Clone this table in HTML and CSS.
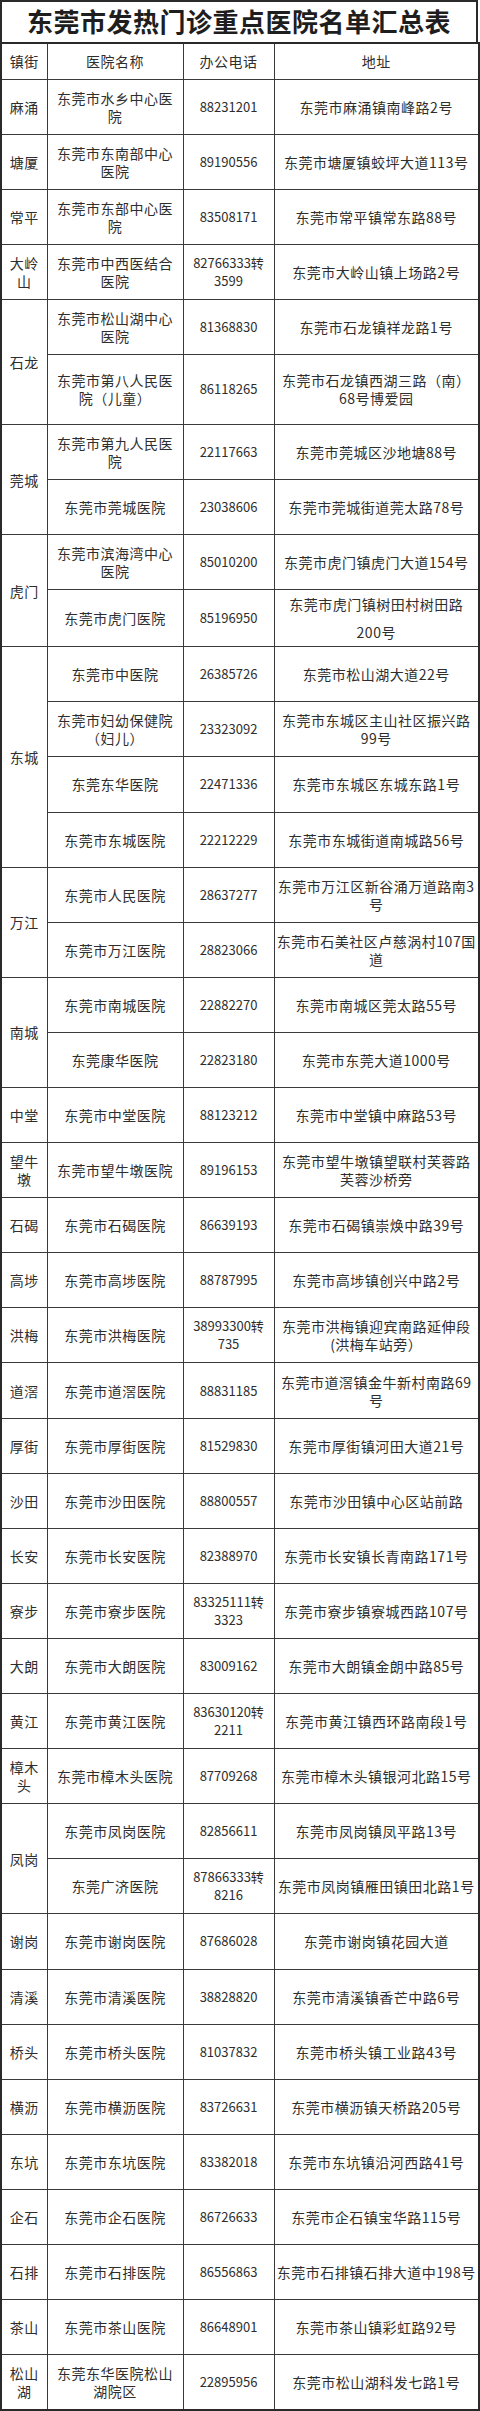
FILE: index.html
```html
<!DOCTYPE html>
<html lang="zh-CN">
<head>
<meta charset="utf-8">
<title>东莞市发热门诊重点医院名单汇总表</title>
<link rel="stylesheet" href="styles.css">
</head>
<body>
<div class="sheet">
  <div class="title">东莞市发热门诊重点医院名单汇总表</div>
  <table class="grid">
    <colgroup>
      <col class="c-town"><col class="c-name"><col class="c-tel"><col class="c-addr">
    </colgroup>
    <thead>
      <tr class="head"><th>镇街</th><th>医院名称</th><th>办公电话</th><th>地址</th></tr>
    </thead>
    <tbody>
      <tr><td>麻涌</td><td>东莞市水乡中心医<br>院</td><td class="tel">88231201</td><td>东莞市麻涌镇南峰路2号</td></tr>
      <tr><td>塘厦</td><td>东莞市东南部中心<br>医院</td><td class="tel">89190556</td><td>东莞市塘厦镇蛟坪大道113号</td></tr>
      <tr><td>常平</td><td>东莞市东部中心医<br>院</td><td class="tel">83508171</td><td>东莞市常平镇常东路88号</td></tr>
      <tr><td>大岭<br>山</td><td>东莞市中西医结合<br>医院</td><td class="tel">82766333转<br>3599</td><td>东莞市大岭山镇上场路2号</td></tr>
      <tr><td rowspan="2">石龙</td><td>东莞市松山湖中心<br>医院</td><td class="tel">81368830</td><td>东莞市石龙镇祥龙路1号</td></tr>
      <tr class="tall"><td>东莞市第八人民医<br>院（儿童）</td><td class="tel">86118265</td><td>东莞市石龙镇西湖三路（南）<br>68号博爱园</td></tr>
      <tr><td rowspan="2">莞城</td><td>东莞市第九人民医<br>院</td><td class="tel">22117663</td><td>东莞市莞城区沙地塘88号</td></tr>
      <tr><td>东莞市莞城医院</td><td class="tel">23038606</td><td>东莞市莞城街道莞太路78号</td></tr>
      <tr><td rowspan="2">虎门</td><td>东莞市滨海湾中心<br>医院</td><td class="tel">85010200</td><td>东莞市虎门镇虎门大道154号</td></tr>
      <tr><td>东莞市虎门医院</td><td class="tel">85196950</td><td class="loose">东莞市虎门镇树田村树田路<br>200号</td></tr>
      <tr><td rowspan="4">东城</td><td>东莞市中医院</td><td class="tel">26385726</td><td>东莞市松山湖大道22号</td></tr>
      <tr><td>东莞市妇幼保健院<br>（妇儿）</td><td class="tel">23323092</td><td>东莞市东城区主山社区振兴路<br>99号</td></tr>
      <tr><td>东莞东华医院</td><td class="tel">22471336</td><td>东莞市东城区东城东路1号</td></tr>
      <tr><td>东莞市东城医院</td><td class="tel">22212229</td><td>东莞市东城街道南城路56号</td></tr>
      <tr><td rowspan="2">万江</td><td>东莞市人民医院</td><td class="tel">28637277</td><td>东莞市万江区新谷涌万道路南3<br>号</td></tr>
      <tr><td>东莞市万江医院</td><td class="tel">28823066</td><td>东莞市石美社区卢慈涡村107国<br>道</td></tr>
      <tr><td rowspan="2">南城</td><td>东莞市南城医院</td><td class="tel">22882270</td><td>东莞市南城区莞太路55号</td></tr>
      <tr><td>东莞康华医院</td><td class="tel">22823180</td><td>东莞市东莞大道1000号</td></tr>
      <tr><td>中堂</td><td>东莞市中堂医院</td><td class="tel">88123212</td><td>东莞市中堂镇中麻路53号</td></tr>
      <tr><td>望牛<br>墩</td><td>东莞市望牛墩医院</td><td class="tel">89196153</td><td>东莞市望牛墩镇望联村芙蓉路<br>芙蓉沙桥旁</td></tr>
      <tr><td>石碣</td><td>东莞市石碣医院</td><td class="tel">86639193</td><td>东莞市石碣镇崇焕中路39号</td></tr>
      <tr><td>高埗</td><td>东莞市高埗医院</td><td class="tel">88787995</td><td>东莞市高埗镇创兴中路2号</td></tr>
      <tr><td>洪梅</td><td>东莞市洪梅医院</td><td class="tel">38993300转<br>735</td><td>东莞市洪梅镇迎宾南路延伸段<br>(洪梅车站旁）</td></tr>
      <tr><td>道滘</td><td>东莞市道滘医院</td><td class="tel">88831185</td><td>东莞市道滘镇金牛新村南路69<br>号</td></tr>
      <tr><td>厚街</td><td>东莞市厚街医院</td><td class="tel">81529830</td><td>东莞市厚街镇河田大道21号</td></tr>
      <tr><td>沙田</td><td>东莞市沙田医院</td><td class="tel">88800557</td><td>东莞市沙田镇中心区站前路</td></tr>
      <tr><td>长安</td><td>东莞市长安医院</td><td class="tel">82388970</td><td>东莞市长安镇长青南路171号</td></tr>
      <tr><td>寮步</td><td>东莞市寮步医院</td><td class="tel">83325111转<br>3323</td><td>东莞市寮步镇寮城西路107号</td></tr>
      <tr><td>大朗</td><td>东莞市大朗医院</td><td class="tel">83009162</td><td>东莞市大朗镇金朗中路85号</td></tr>
      <tr><td>黄江</td><td>东莞市黄江医院</td><td class="tel">83630120转<br>2211</td><td>东莞市黄江镇西环路南段1号</td></tr>
      <tr><td>樟木<br>头</td><td>东莞市樟木头医院</td><td class="tel">87709268</td><td>东莞市樟木头镇银河北路15号</td></tr>
      <tr><td rowspan="2">凤岗</td><td>东莞市凤岗医院</td><td class="tel">82856611</td><td>东莞市凤岗镇凤平路13号</td></tr>
      <tr><td>东莞广济医院</td><td class="tel">87866333转<br>8216</td><td>东莞市凤岗镇雁田镇田北路1号</td></tr>
      <tr><td>谢岗</td><td>东莞市谢岗医院</td><td class="tel">87686028</td><td>东莞市谢岗镇花园大道</td></tr>
      <tr><td>清溪</td><td>东莞市清溪医院</td><td class="tel">38828820</td><td>东莞市清溪镇香芒中路6号</td></tr>
      <tr><td>桥头</td><td>东莞市桥头医院</td><td class="tel">81037832</td><td>东莞市桥头镇工业路43号</td></tr>
      <tr><td>横沥</td><td>东莞市横沥医院</td><td class="tel">83726631</td><td>东莞市横沥镇天桥路205号</td></tr>
      <tr><td>东坑</td><td>东莞市东坑医院</td><td class="tel">83382018</td><td>东莞市东坑镇沿河西路41号</td></tr>
      <tr><td>企石</td><td>东莞市企石医院</td><td class="tel">86726633</td><td>东莞市企石镇宝华路115号</td></tr>
      <tr><td>石排</td><td>东莞市石排医院</td><td class="tel">86556863</td><td>东莞市石排镇石排大道中198号</td></tr>
      <tr><td>茶山</td><td>东莞市茶山医院</td><td class="tel">86648901</td><td>东莞市茶山镇彩虹路92号</td></tr>
      <tr><td>松山<br>湖</td><td>东莞东华医院松山<br>湖院区</td><td class="tel">22895956</td><td>东莞市松山湖科发七路1号</td></tr>
    </tbody>
  </table>
</div>
</body>
</html>
```
FILE: styles.css
```css
html, body {
  margin: 0;
  padding: 0;
  background: #ffffff;
}

.sheet {
  width: 480px;
  font-family: "Noto Sans CJK SC", "Noto Sans", sans-serif;
  color: #2e2e2e;
}

.title {
  box-sizing: border-box;
  width: 478px;
  height: 42px;
  border: 2px solid #2a2a2a;
  border-bottom: none;
  text-align: center;
  font-size: 26px;
  font-weight: 700;
  line-height: 38px;
  letter-spacing: 0.5px;
  color: #1e1e1e;
  white-space: nowrap;
}

.grid {
  width: 478px;
  border-collapse: collapse;
  table-layout: fixed;
  border: 2px solid #2a2a2a;
}

.c-town { width: 46px; }
.c-name { width: 136px; }
.c-tel { width: 91px; }
.c-addr { width: 205px; }

.grid th,
.grid td {
  border: 1px solid #3a3a3a;
  padding: 0 1px;
  text-align: center;
  vertical-align: middle;
  font-size: 14px;
  font-weight: 400;
  line-height: 18px;
  letter-spacing: 0.5px;
  white-space: nowrap;
  overflow: hidden;
}

.grid .head {
  height: 36px;
}

.grid tbody tr {
  height: 55.1px;
}

.grid tbody tr.tall {
  height: 70px;
}

.grid td.tel {
  font-size: 13px;
  letter-spacing: 0;
}

.grid td.loose {
  line-height: 28px;
}
```
